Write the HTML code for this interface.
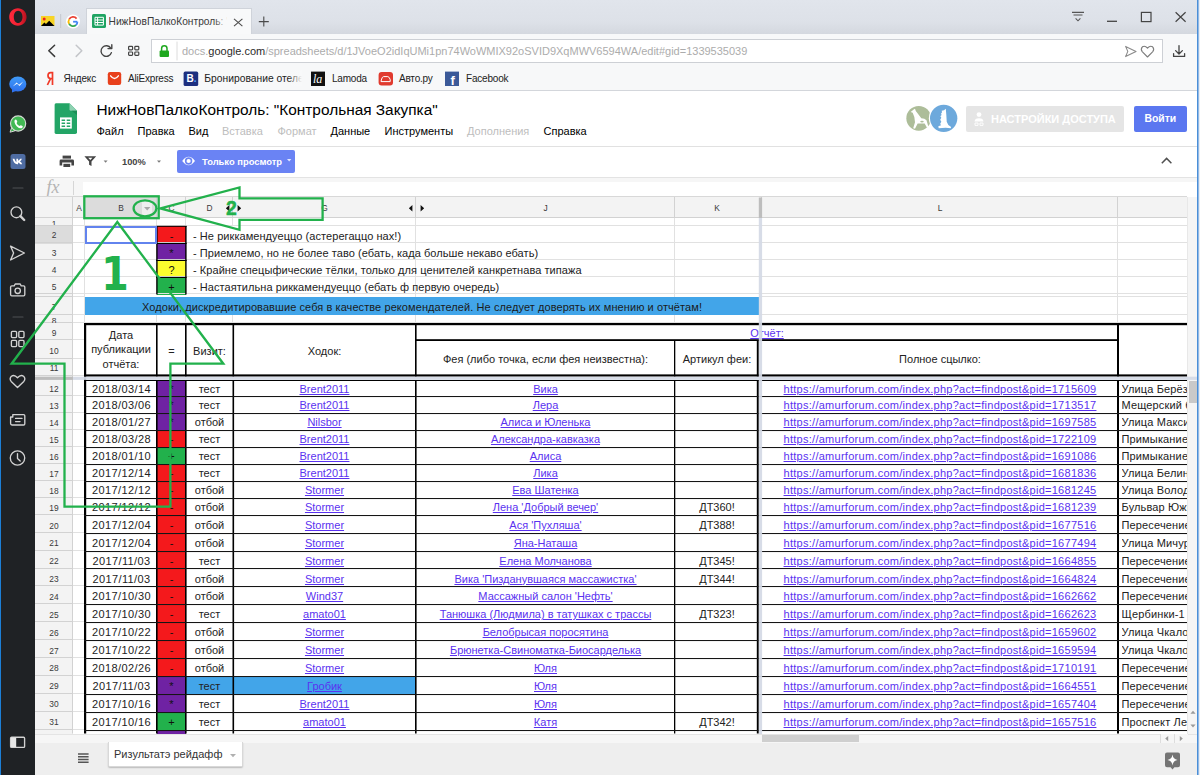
<!DOCTYPE html>
<html lang="ru"><head><meta charset="utf-8"><title>НижНовПалкоКонтроль: "Контрольная Закупка"</title>
<style>
*{box-sizing:border-box;margin:0;padding:0}
html,body{width:1200px;height:775px;overflow:hidden;background:#fff}
body{font-family:"Liberation Sans",sans-serif;font-size:12px;color:#222}
#root{position:relative;width:1200px;height:775px;overflow:hidden;background:#fff}
.abs{position:absolute}
.t{position:absolute;white-space:nowrap;line-height:1}
svg{position:absolute;overflow:visible}
/* opera sidebar */
#side{position:absolute;left:0;top:0;width:35px;height:775px;background:#1f2225;border-left:1px solid #1c7fd6}
/* browser chrome */
#tabbar{position:absolute;left:35px;top:0;width:1165px;height:34px;background:linear-gradient(#e1e5ec,#dde1e8 65%,#d4d8df)}
#tab{position:absolute;left:86px;top:8px;width:165.500px;height:27px;background:#f8f9fa;border:1px solid #cfd3da;border-bottom:none}
#nav{position:absolute;left:35px;top:34px;width:1165px;height:57px;background:#f7f8f9;border-bottom:1px solid #d3d6db}
#url{position:absolute;left:151px;top:39px;width:1012px;height:24px;background:#fff;border:1px solid #cdd0d5}
.bm{font-size:10px;color:#222;top:73.5px;letter-spacing:-0.2px}
/* docs */
#dochead{position:absolute;left:35px;top:91px;width:1163px;height:56px;background:#fff;border-bottom:1px solid #e1e1e1}
#toolbar{position:absolute;left:35px;top:147px;width:1163px;height:31px;background:#fff;border-bottom:1px solid #e3e3e3}
#fbar{position:absolute;left:35px;top:178px;width:1163px;height:19px;background:#fff}
.menu{font-size:11px;top:126px;color:#000}
.menu.dis{color:#bdbdbd}
/* grid */
.c{position:absolute;font-size:11px;color:#222;white-space:nowrap;text-align:center;overflow:hidden;line-height:1}
.c a,.lnk{color:#5a32f0;text-decoration:underline}

</style></head>
<body>
<div id="root">
<!-- ===== Opera sidebar ===== -->
<div id="side"></div>
<svg width="35" height="775" style="left:0;top:0" fill="none" stroke="#d2d2d2" stroke-width="1.350" stroke-linecap="round" stroke-linejoin="round">
  <!-- opera logo -->
  <defs><linearGradient id="og" x1="0" y1="0" x2="1" y2="0"><stop offset="0" stop-color="#ff2a3c"/><stop offset=".6" stop-color="#ee1f30"/><stop offset="1" stop-color="#b3121f"/></linearGradient></defs><path fill-rule="evenodd" stroke="none" fill="url(#og)" d="M17.900 8.200 C22.800 8.200 26.600 12.100 26.600 17 C26.600 21.900 22.800 25.800 17.900 25.800 C13 25.800 9.200 21.900 9.200 17 C9.200 12.100 13 8.200 17.900 8.200 Z M18.100 10.800 C15.500 10.800 13.800 13.600 13.800 16.900 C13.800 20.200 15.500 23 18.100 23 C20.700 23 22.500 20.200 22.500 16.900 C22.500 13.600 20.700 10.800 18.100 10.800 Z"/>
  <!-- messenger -->
  <defs><linearGradient id="mg" x1="0" y1="0" x2="0" y2="1"><stop offset="0" stop-color="#3f9bf8"/><stop offset="1" stop-color="#2f72ee"/></linearGradient></defs><ellipse cx="17.800" cy="84" rx="8.600" ry="7.400" fill="url(#mg)" stroke="none"/>
  <path d="M12 92.400 L12 88 L16 91 Z" fill="#2f72ee" stroke="none"/>
  <path d="M12.8 86.6 L16.6 82.4 L19 84.8 L23.2 81.6 L19.6 86 L17 83.8 Z" fill="#fff" stroke="none"/>
  <!-- whatsapp -->
  <circle cx="18.100" cy="123.500" r="7.600" fill="#42b954" stroke="#d4dcd4" stroke-width="1.200"/>
  <path d="M10.200 131.800 L11.600 127.800 L14.600 130.600 Z" fill="#42b954" stroke="#d4dcd4" stroke-width="1"/>
  <path transform="translate(0.100,-0.500)" d="M14.6 120.6 q1.2-1.4 2 .2 l.6 1.4 q-.2 .8-.8 1.2 q1 2.2 3.200 3.200 q.6-.8 1.200-.8 l1.600 .8 q.8 .8-.4 1.800 q-2 1.400-5.200-1.400 q-3.200-3.400-2.200-6.400 z" fill="#fff" stroke="none"/>
  <!-- vk -->
  <rect x="10.500" y="154" width="15" height="15" rx="2.500" fill="#4f6da3" stroke="none"/>
  <path d="M12.600 158.800 h1.800 q.8 2.600 2 3.400 v-3.400 h1.700 v2 q1.200-.4 2.100-2 h1.700 q-.5 1.600-1.900 2.800 q1.500 .9 2.200 2.600 h-1.900 q-.7-1.300-2.200-1.800 v1.800 h-.9 q-3.400-.2-4.600-5.400 z" fill="#fff" stroke="none"/>
  <line x1="13" y1="188" x2="23" y2="188" stroke="#4e5154" stroke-width="1.200"/>
  <!-- search -->
  <circle cx="16.400" cy="212.300" r="5.400"/>
  <line x1="20.400" y1="216.200" x2="24.200" y2="220" stroke-width="2.400"/>
  <!-- flow -->
  <path d="M10.600 246.200 L24.400 253 L10.600 260 L13.600 253 Z"/>
  <!-- camera -->
  <path d="M10.600 287 q0-1.200 1.200-1.200 h2.400 l1-1.800 h5 l1 1.800 h2.400 q1.200 0 1.200 1.200 v7.600 q0 1.200-1.200 1.200 h-11.800 q-1.200 0-1.200-1.200 z"/>
  <circle cx="17.700" cy="290.800" r="2.700"/>
  <line x1="13" y1="317" x2="23" y2="317" stroke="#4e5154" stroke-width="1.200"/>
  <!-- speed dial -->
  <rect x="11.400" y="331.400" width="5.200" height="6.200" rx="1"/>
  <rect x="18.800" y="331.400" width="5.200" height="6.200" rx="1"/>
  <rect x="11.400" y="340.400" width="5.200" height="6.200" rx="1"/>
  <rect x="18.800" y="340.400" width="5.200" height="6.200" rx="1"/>
  <!-- heart -->
  <path d="M17.500 387.600 L11.200 381.400 q-2.200-2.800 .2-5.200 q3-2 6.100 1.600 q3.100-3.600 6.100-1.600 q2.400 2.400 .2 5.200 z"/>
  <!-- news -->
  <path d="M12.800 414.600 h10.800 q1.200 0 1.200 1.200 v8 q0 1.200-1.200 1.200 h-11.600 q-1.400 0-1.400-1.400 v-6.600 h2.200 z"/>
  <line x1="15.600" y1="418.400" x2="22" y2="418.400"/><line x1="15.600" y1="421.600" x2="20" y2="421.600"/>
  <!-- clock -->
  <circle cx="17.500" cy="458" r="7.200"/>
  <path d="M17.500 453.600 V458.400 L20.200 461"/>
  <!-- sidebar toggle -->
  <rect x="10.600" y="737.200" width="14" height="10.200" rx="1"/>
  <rect x="11" y="737.600" width="5.200" height="9.400" fill="#e6e6e6" stroke="none"/>
</svg>
<!-- ===== tab bar ===== -->
<div id="tabbar"></div>
<div id="tab"></div>
<svg width="1165" height="34" style="left:35px;top:0">
  <!-- picture favicon -->
  <rect x="6" y="16" width="13.500" height="10" fill="#f7d426"/>
  <path d="M6 26 L9.400 22.600 L11 24 L14.200 20.800 L19.500 26 Z" fill="#000"/>
  <circle cx="9.200" cy="19" r="1.500" fill="#ee2222"/>
  <line x1="25.700" y1="14" x2="25.700" y2="28" stroke="#c3c7ce" stroke-width="1"/>
  <!-- google G -->
  <circle cx="38" cy="21.500" r="7" fill="#fff"/>
  <path d="M42.300 21.700 h-4.200" stroke="#4285f4" stroke-width="1.800" fill="none"/>
  <path d="M41.600 18.600 A4.500 4.500 0 0 0 34.100 19.400" stroke="#ea4335" stroke-width="1.800" fill="none"/>
  <path d="M34.100 19.400 A4.500 4.500 0 0 0 34.100 23.800" stroke="#fbbc05" stroke-width="1.800" fill="none"/>
  <path d="M34.100 23.800 A4.500 4.500 0 0 0 41 25" stroke="#34a853" stroke-width="1.800" fill="none"/>
  <path d="M41 25 A4.500 4.500 0 0 0 42.400 21.700" stroke="#4285f4" stroke-width="1.800" fill="none"/>
  <!-- sheets favicon -->
  <rect x="57" y="14" width="14" height="14" rx="1.600" fill="#1fa463"/>
  <path d="M60 17.300 h8.400 v7.800 h-8.400 z M60 20 h8.400 M60 22.500 h8.400 M62.600 17.300 v7.800" stroke="#fff" stroke-width="1" fill="none"/>
  <!-- close x -->
  <path d="M199 18.800 L207.400 26.200 M207.400 18.800 L199 26.200" stroke="#4c4c4c" stroke-width="1.100"/>
  <!-- plus -->
  <path d="M223.800 21.600 h10 M228.800 16.600 v10" stroke="#4a4a4a" stroke-width="1.100"/>
  <!-- window controls -->
  <path d="M1037 12.400 h12 M1038.500 15 h9 M1040.600 18.400 l2.400 2.400 l2.400-2.400" stroke="#555" stroke-width="1.100" fill="none"/>
  <path d="M1072 21.300 h10" stroke="#444" stroke-width="1.300"/>
  <rect x="1106.400" y="12.400" width="9.600" height="9.200" stroke="#444" stroke-width="1.200" fill="none"/>
  <path d="M1140.600 12.200 L1150.600 21.800 M1150.600 12.200 L1140.600 21.800" stroke="#444" stroke-width="1.200"/>
</svg>
<div class="t" style="left:108.500px;top:16.500px;font-size:10.200px;color:#3a3a3a;width:118px;overflow:hidden;letter-spacing:0.02px">НижНовПалкоКонтроль: "Контрольная Закупка"</div>
<div class="abs" style="left:214px;top:12px;width:14px;height:20px;background:linear-gradient(90deg,rgba(248,249,250,0),#f8f9fa)"></div>
<!-- ===== nav + bookmarks ===== -->
<div id="nav"></div>
<div id="url"></div>
<svg width="1165" height="57" style="left:35px;top:34px" fill="none" stroke-linecap="round" stroke-linejoin="round">
  <path d="M19.600 11.200 L13.800 16.800 L19.600 22.400" stroke="#3a3a3a" stroke-width="1.500"/>
  <path d="M41.200 11.200 L46.800 16.800 L41.200 22.400" stroke="#c4c6ca" stroke-width="1.500"/>
  <path d="M75.800 14.200 A5.300 5.300 0 1 0 76.400 18.600" stroke="#444" stroke-width="1.400"/>
  <path d="M76.800 10.800 V14.600 H73" stroke="#444" stroke-width="1.400"/>
  <g stroke="#444" stroke-width="1.200"><rect x="93.600" y="12.400" width="4" height="3.400" rx=".8"/><rect x="99.800" y="12.400" width="4" height="3.400" rx=".8"/><rect x="93.600" y="18" width="4" height="3.400" rx=".8"/><rect x="99.800" y="18" width="4" height="3.400" rx=".8"/></g>
  <!-- lock -->
  <rect x="124.600" y="16.400" width="9.400" height="6.600" rx="1" fill="#1fa81f" stroke="none"/>
  <path d="M126.600 16.400 v-2 a2.700 2.700 0 0 1 5.400 0 v2" stroke="#1fa81f" stroke-width="1.500"/>
  <line x1="142" y1="8" x2="142" y2="26" stroke="#dcdcdc" stroke-width="1"/>
  <!-- send + heart -->
  <path d="M1090.600 12.400 L1101 17.400 L1090.600 22.600 L1092.800 17.400 Z" stroke="#8a8a8a" stroke-width="1.100"/>
  <path d="M1112.500 23 L1107.200 17.600 q-1.900-2.600 .2-4.800 q2.600-1.700 5.100 1.400 q2.500-3.100 5.100-1.400 q2.100 2.200 .2 4.800 z" stroke="#7d7d7d" stroke-width="1.100"/>
  <!-- download -->
  <path d="M1144 11.600 V19.600 M1140.600 16.600 L1144 20 L1147.400 16.600 M1138.600 19.600 V22.400 H1149.600 V19.600" stroke="#444" stroke-width="1.300"/>
  <!-- bookmark icons -->
  <path d="M17.500 51 V38.600 H15.600 q-2.600 0-2.600 3 q0 3 2.600 3 H17.500 M15.400 44.800 L12.400 51" stroke="#f03a28" stroke-width="1.700" stroke-linecap="butt" stroke-linejoin="miter"/>
  <rect x="72.800" y="38" width="13.400" height="13" rx="2.200" fill="#e8401c" stroke="none"/>
  <path d="M75.600 41.800 q3.900 5.400 7.800 0" stroke="#fff" stroke-width="1.300"/>
  <rect x="148.600" y="37.600" width="14.600" height="14.400" rx="1.600" fill="#1d2f7f" stroke="none"/>
  <rect x="276" y="37.600" width="14" height="14.400" fill="#111" stroke="none"/>
  <rect x="343.600" y="38" width="14.400" height="13.600" rx="3" fill="#e03a2e" stroke="none"/>
  <path d="M346.400 45.600 q.6-2.800 2.200-3 h4.200 q1.600 .2 2.400 3 v2 h-8.800 z" stroke="#fff" stroke-width="1"/>
  <rect x="410" y="37.600" width="14" height="14.400" fill="#3b5998" stroke="none"/>
</svg>
<div class="t" style="left:186.500px;top:74px;font-size:10px;font-weight:700;color:#fff">B<span style="color:#4aa3ff">.</span></div>
<div class="t" style="left:313px;top:73px;font-size:12px;font-style:italic;font-family:'Liberation Serif',serif;color:#fff">la</div>
<div class="t" style="left:450.500px;top:73.500px;font-size:13px;font-weight:700;color:#fff">f</div>
<div class="t" id="urltxt" style="left:182px;top:45.700px;font-size:11px;color:#acacac"><span>docs.</span><span style="color:#2b2b2b">google.com</span><span>/spreadsheets/d/1JVoeO2idIqUMi1pn74WoWMIX92oSVID9XqMWV6594WA/edit#gid=1339535039</span></div>
<div class="t bm" style="left:63.500px">Яндекс</div>
<div class="t bm" style="left:128px">AliExpress</div>
<div class="t bm" style="left:204.300px;width:98px;overflow:hidden;font-size:10.300px;letter-spacing:0">Бронирование отелей</div>
<div class="abs" style="left:288px;top:70px;width:14px;height:16px;background:linear-gradient(90deg,rgba(248,249,250,0),#f8f9fa)"></div>
<div class="t bm" style="left:332px">Lamoda</div>
<div class="t bm" style="left:399px">Авто.ру</div>
<div class="t bm" style="left:466px">Facebook</div>
<!-- window right edge -->
<div class="abs" style="left:1197px;top:0;width:1px;height:775px;background:#4a8fd8;z-index:50"></div>
<div class="abs" style="left:1198px;top:0;width:1px;height:775px;background:#94b9e4;z-index:50"></div>
<div class="abs" style="left:1199px;top:0;width:1px;height:775px;background:#e9eef4;z-index:50"></div>
<!-- ===== Google Sheets header ===== -->
<div id="dochead"></div>
<svg width="30" height="40" style="left:50px;top:100px">
  <path d="M6 3.200 H19.500 L27 10.700 V32.200 Q27 34 25.200 34 H6 Q4.600 34 4.600 32.200 V5 Q4.600 3.200 6 3.200 Z" fill="#23a566"/>
  <path d="M19.500 3.200 L27 10.700 H21 Q19.500 10.700 19.500 9.200 Z" fill="#8ed1b1"/>
  <path d="M27 10.700 V15 L21.500 10.700 Z" fill="#1c8f57"/>
  <rect x="10" y="17.400" width="11.800" height="11.200" fill="#fff"/>
  <path d="M11.600 19.400 h3.500 v1.600 h-3.500 z M16.700 19.400 h3.500 v1.600 h-3.500 z M11.600 22.400 h3.500 v1.600 h-3.500 z M16.700 22.400 h3.500 v1.600 h-3.500 z M11.600 25.400 h3.500 v1.600 h-3.500 z M16.700 25.400 h3.500 v1.600 h-3.500 z" fill="#23a566"/>
</svg>
<div class="t" id="title" style="left:96.500px;top:101.500px;font-size:15.400px;color:#000">НижНовПалкоКонтроль: "Контрольная Закупка"</div>
<div class="t menu" style="left:96.500px">Файл</div>
<div class="t menu" style="left:137.500px">Правка</div>
<div class="t menu" style="left:188.500px">Вид</div>
<div class="t menu dis" style="left:222px">Вставка</div>
<div class="t menu dis" style="left:277.500px">Формат</div>
<div class="t menu" style="left:330.500px">Данные</div>
<div class="t menu" style="left:384.500px">Инструменты</div>
<div class="t menu dis" style="left:467px">Дополнения</div>
<div class="t menu" style="left:543.500px">Справка</div>
<!-- avatars -->
<svg width="80" height="45" viewBox="0 0 1200 675" style="left:895px;top:95px">
  <circle cx="356" cy="350" r="186" fill="#adbd99"/>
  <circle cx="730" cy="350" r="222" fill="#fff"/>
  <circle cx="730" cy="350" r="205" fill="#6da9dc"/>
  <path d="M235 255 L285 215 L300 208 L312 240 L395 350 L440 358 L472 380 L502 480 L480 492 L445 427 L340 427 L300 507 L273 500 L300 410 L290 330 L265 268 Z" fill="#fff"/>
  <ellipse cx="405" cy="398" rx="26" ry="13" fill="#adbd99"/>
  <path d="M700 235 L735 227 L762 208 L770 300 L776 400 L800 450 L842 480 L835 497 L760 490 L655 497 L650 470 L690 455 L678 430 L695 400 L678 370 L695 340 L680 318 L700 300 L690 280 L706 260 Z" fill="#fff"/>
</svg>
<!-- share button -->
<div class="abs" style="left:966px;top:105.500px;width:157.500px;height:26.500px;background:#e5e5e5;border-radius:2px"></div>
<svg width="14" height="16" style="left:973px;top:111px" fill="#fff"><circle cx="6" cy="3.600" r="2.400"/><path d="M1.600 10.600 q0-3.400 4.400-3.400 q4.400 0 4.400 3.400 z"/><path d="M2 12 h3 v2.400 h-3 z M7 12 h3 v2.400 h-3 z" fill="none" stroke="#fff" stroke-width=".9"/></svg>
<div class="t" style="left:991px;top:113.500px;font-size:11px;font-weight:700;color:#fff">НАСТРОЙКИ ДОСТУПА</div>
<div class="abs" style="left:1133.500px;top:106px;width:53.500px;height:25.500px;background:#5b77f0;border-radius:2px"></div>
<div class="t" style="left:1144.500px;top:113.500px;font-size:10.400px;font-weight:700;color:#fff">Войти</div>
<!-- toolbar -->
<div id="toolbar"></div>
<svg width="300" height="31" style="left:35px;top:147px">
  <!-- printer -->
  <path d="M27.600 8.600 h8.400 v3 h-8.400 z" fill="#444"/>
  <path d="M26 12.600 h11.600 q1.400 0 1.400 1.400 v4.400 h-2.600 v-2.800 h-9.200 v2.800 h-2.600 v-4.400 q0-1.400 1.400-1.400 z" fill="#444"/>
  <path d="M28.400 16.800 h6.800 v3.200 h-6.800 z" fill="#444"/>
  <!-- filter -->
  <path d="M49.400 9.200 h11.800 l-4.700 5.200 v4.600 l-2.400-1.200 v-3.400 z" fill="#444"/>
  <path d="M53.200 10.700 h4.200 l-2.100 2.300 z" fill="#fff"/>
  <path d="M68.600 13.400 h4 l-2 2.300 z" fill="#7a7a7a"/>
  <path d="M122 13.400 h4 l-2 2.300 z" fill="#7a7a7a"/>
</svg>
<div class="t" style="left:122px;top:157.500px;font-size:9.300px;font-weight:700;color:#444">100%</div>
<div class="abs" style="left:176.500px;top:149.500px;width:118px;height:23.500px;background:#6a83f4;border-radius:2px"></div>
<svg width="16" height="12" style="left:182px;top:155px"><path d="M.2 6 Q6.600 -2.400 13 6 Q6.600 14.400 .2 6 Z" fill="#fff"/><circle cx="6.600" cy="6" r="3.700" fill="#6a83f4"/><circle cx="6.600" cy="6" r="2.100" fill="#fff"/></svg>
<div class="t" style="left:202px;top:156.500px;font-size:9.400px;font-weight:700;color:#fff">Только просмотр</div>
<svg width="6" height="4" style="left:286.500px;top:159px"><path d="M0 0 h4.400 l-2.200 2.400 z" fill="#e3e8ff"/></svg>
<svg width="14" height="10" style="left:1160px;top:156px"><path d="M1.800 7.200 L6.600 2.400 L11.400 7.200" fill="none" stroke="#505050" stroke-width="1.450"/></svg>
<!-- formula bar -->
<div id="fbar"></div>
<div class="abs" style="left:35px;top:178px;width:48px;height:19px;background:#f6f6f6"></div>
<div class="abs" style="left:83px;top:178px;width:1115px;height:3.500px;background:#f6f6f6"></div>
<div class="t" style="left:46.500px;top:177.500px;font-size:18px;font-style:italic;font-family:'Liberation Serif',serif;color:#b4b4b4">fx</div>
<div class="abs" style="left:73px;top:180.500px;width:1px;height:14px;background:#d6d6d6"></div>
<div id="gridwrap" class="abs" style="left:0;top:0;width:1187px;height:733.5px;overflow:hidden">
<div class="abs" style="left:35px;top:197px;width:1152px;height:21px;background:#f3f3f3"></div>
<div class="abs" style="left:35px;top:197px;width:38px;height:537px;background:#f3f3f3"></div>
<div class="abs" style="left:85px;top:197px;width:72px;height:21px;background:#dcdcdc"></div>
<div class="abs" style="left:35px;top:226px;width:38px;height:17.5px;background:#dcdcdc"></div>
<div class="abs" style="left:142px;top:201px;width:10px;height:14px;background:#efefef"></div>
<svg width="8" height="5" style="left:144px;top:206.5px"><path d="M0 0 h6.400 l-3.200 3.600 z" fill="#a8a8a8"/></svg>
<div class="abs" style="left:157px;top:226px;width:29px;height:17.5px;background:#f4191c"></div>
<div class="abs" style="left:157px;top:243.5px;width:29px;height:17px;background:#6f22a3"></div>
<div class="abs" style="left:157px;top:260.5px;width:29px;height:17px;background:#fcfc2e"></div>
<div class="abs" style="left:157px;top:277.5px;width:29px;height:17px;background:#22b14c"></div>
<div class="abs" style="left:85px;top:297px;width:674px;height:18px;background:#42a5e9"></div>
<div class="abs" style="left:157px;top:380px;width:29px;height:16.6px;background:#6f22a3"></div>
<div class="abs" style="left:157px;top:396.6px;width:29px;height:16.9px;background:#6f22a3"></div>
<div class="abs" style="left:157px;top:413.5px;width:29px;height:16.9px;background:#6f22a3"></div>
<div class="abs" style="left:157px;top:430.4px;width:29px;height:17px;background:#f4191c"></div>
<div class="abs" style="left:157px;top:447.4px;width:29px;height:17px;background:#22b14c"></div>
<div class="abs" style="left:157px;top:464.4px;width:29px;height:17px;background:#f4191c"></div>
<div class="abs" style="left:157px;top:481.4px;width:29px;height:17px;background:#f4191c"></div>
<div class="abs" style="left:157px;top:498.4px;width:29px;height:17.1px;background:#f4191c"></div>
<div class="abs" style="left:157px;top:515.5px;width:29px;height:17.8px;background:#f4191c"></div>
<div class="abs" style="left:157px;top:533.3px;width:29px;height:17.8px;background:#f4191c"></div>
<div class="abs" style="left:157px;top:551.1px;width:29px;height:17.8px;background:#f4191c"></div>
<div class="abs" style="left:157px;top:568.9px;width:29px;height:17.7px;background:#f4191c"></div>
<div class="abs" style="left:157px;top:586.6px;width:29px;height:17.9px;background:#f4191c"></div>
<div class="abs" style="left:157px;top:604.5px;width:29px;height:17.9px;background:#f4191c"></div>
<div class="abs" style="left:157px;top:622.4px;width:29px;height:17.9px;background:#f4191c"></div>
<div class="abs" style="left:157px;top:640.3px;width:29px;height:18px;background:#f4191c"></div>
<div class="abs" style="left:157px;top:658.3px;width:29px;height:17.9px;background:#f4191c"></div>
<div class="abs" style="left:157px;top:676.2px;width:29px;height:17.9px;background:#6f22a3"></div>
<div class="abs" style="left:157px;top:694.1px;width:29px;height:18.1px;background:#6f22a3"></div>
<div class="abs" style="left:157px;top:712.2px;width:29px;height:17.8px;background:#22b14c"></div>
<div class="abs" style="left:157px;top:730px;width:29px;height:3.5px;background:#6f22a3"></div>
<div class="abs" style="left:186px;top:676.2px;width:230px;height:17.9px;background:#42a5e9"></div>
<svg width="1187" height="734" style="left:0;top:0" shape-rendering="auto"><rect x="72" y="197" width="1" height="21" fill="#d2d2d2"/><rect x="84" y="197" width="1" height="21" fill="#d2d2d2"/><rect x="156" y="197" width="1" height="21" fill="#d2d2d2"/><rect x="185" y="197" width="1" height="21" fill="#d2d2d2"/><rect x="232" y="197" width="1" height="21" fill="#d2d2d2"/><rect x="415" y="197" width="1" height="21" fill="#d2d2d2"/><rect x="674" y="197" width="1" height="21" fill="#d2d2d2"/><rect x="761" y="197" width="1" height="21" fill="#d2d2d2"/><rect x="1117" y="197" width="1" height="21" fill="#d2d2d2"/><rect x="35" y="217" width="1152" height="1" fill="#d2d2d2"/><rect x="35" y="196" width="1152" height="1" fill="#d8d8d8"/><rect x="72" y="197" width="1" height="536.5" fill="#d2d2d2"/><rect x="35" y="225" width="38" height="1" fill="#d2d2d2"/><rect x="35" y="242" width="38" height="1" fill="#d2d2d2"/><rect x="35" y="259" width="38" height="1" fill="#d2d2d2"/><rect x="35" y="276" width="38" height="1" fill="#d2d2d2"/><rect x="35" y="293" width="38" height="1" fill="#d2d2d2"/><rect x="35" y="296" width="38" height="1" fill="#d2d2d2"/><rect x="35" y="314" width="38" height="1" fill="#d2d2d2"/><rect x="35" y="322" width="38" height="1" fill="#d2d2d2"/><rect x="35" y="339" width="38" height="1" fill="#d2d2d2"/><rect x="35" y="358" width="38" height="1" fill="#d2d2d2"/><rect x="35" y="375" width="38" height="1" fill="#d2d2d2"/><rect x="35" y="395" width="38" height="1" fill="#d2d2d2"/><rect x="35" y="412" width="38" height="1" fill="#d2d2d2"/><rect x="35" y="429" width="38" height="1" fill="#d2d2d2"/><rect x="35" y="446" width="38" height="1" fill="#d2d2d2"/><rect x="35" y="463" width="38" height="1" fill="#d2d2d2"/><rect x="35" y="480" width="38" height="1" fill="#d2d2d2"/><rect x="35" y="497" width="38" height="1" fill="#d2d2d2"/><rect x="35" y="514" width="38" height="1" fill="#d2d2d2"/><rect x="35" y="532" width="38" height="1" fill="#d2d2d2"/><rect x="35" y="550" width="38" height="1" fill="#d2d2d2"/><rect x="35" y="568" width="38" height="1" fill="#d2d2d2"/><rect x="35" y="585" width="38" height="1" fill="#d2d2d2"/><rect x="35" y="603" width="38" height="1" fill="#d2d2d2"/><rect x="35" y="621" width="38" height="1" fill="#d2d2d2"/><rect x="35" y="639" width="38" height="1" fill="#d2d2d2"/><rect x="35" y="657" width="38" height="1" fill="#d2d2d2"/><rect x="35" y="675" width="38" height="1" fill="#d2d2d2"/><rect x="35" y="693" width="38" height="1" fill="#d2d2d2"/><rect x="35" y="711" width="38" height="1" fill="#d2d2d2"/><rect x="35" y="729" width="38" height="1" fill="#d2d2d2"/><rect x="35" y="747" width="38" height="1" fill="#d2d2d2"/><rect x="73" y="225" width="1114" height="1" fill="#e1e1e1"/><rect x="73" y="242" width="1114" height="1" fill="#e1e1e1"/><rect x="73" y="259" width="1114" height="1" fill="#e1e1e1"/><rect x="73" y="276" width="1114" height="1" fill="#e1e1e1"/><rect x="73" y="293" width="1114" height="1" fill="#e1e1e1"/><rect x="73" y="296" width="12" height="1" fill="#e1e1e1"/><rect x="759" y="296" width="428" height="1" fill="#e1e1e1"/><rect x="73" y="314" width="12" height="1" fill="#e1e1e1"/><rect x="759" y="314" width="428" height="1" fill="#e1e1e1"/><rect x="73" y="322" width="1114" height="1" fill="#e1e1e1"/><rect x="84" y="218" width="1" height="8" fill="#e1e1e1"/><rect x="84" y="315" width="1" height="8" fill="#e1e1e1"/><rect x="156" y="218" width="1" height="8" fill="#e1e1e1"/><rect x="156" y="315" width="1" height="8" fill="#e1e1e1"/><rect x="185" y="218" width="1" height="8" fill="#e1e1e1"/><rect x="185" y="315" width="1" height="8" fill="#e1e1e1"/><rect x="232" y="218" width="1" height="8" fill="#e1e1e1"/><rect x="232" y="315" width="1" height="8" fill="#e1e1e1"/><rect x="415" y="218" width="1" height="8" fill="#e1e1e1"/><rect x="415" y="315" width="1" height="8" fill="#e1e1e1"/><rect x="674" y="218" width="1" height="8" fill="#e1e1e1"/><rect x="674" y="315" width="1" height="8" fill="#e1e1e1"/><rect x="1117" y="218" width="1" height="8" fill="#e1e1e1"/><rect x="1117" y="315" width="1" height="8" fill="#e1e1e1"/><rect x="84" y="218" width="1" height="106" fill="#e1e1e1"/><rect x="1117" y="218" width="1" height="106" fill="#e1e1e1"/><rect x="674" y="226" width="1" height="71" fill="#e1e1e1"/><rect x="415" y="226" width="1" height="71" fill="#e1e1e1"/><rect x="73" y="339" width="12" height="1" fill="#e1e1e1"/><rect x="73" y="358" width="12" height="1" fill="#e1e1e1"/><rect x="73" y="375" width="12" height="1" fill="#e1e1e1"/><rect x="73" y="395" width="12" height="1" fill="#e1e1e1"/><rect x="73" y="412" width="12" height="1" fill="#e1e1e1"/><rect x="73" y="429" width="12" height="1" fill="#e1e1e1"/><rect x="73" y="446" width="12" height="1" fill="#e1e1e1"/><rect x="73" y="463" width="12" height="1" fill="#e1e1e1"/><rect x="73" y="480" width="12" height="1" fill="#e1e1e1"/><rect x="73" y="497" width="12" height="1" fill="#e1e1e1"/><rect x="73" y="514" width="12" height="1" fill="#e1e1e1"/><rect x="73" y="532" width="12" height="1" fill="#e1e1e1"/><rect x="73" y="550" width="12" height="1" fill="#e1e1e1"/><rect x="73" y="568" width="12" height="1" fill="#e1e1e1"/><rect x="73" y="585" width="12" height="1" fill="#e1e1e1"/><rect x="73" y="603" width="12" height="1" fill="#e1e1e1"/><rect x="73" y="621" width="12" height="1" fill="#e1e1e1"/><rect x="73" y="639" width="12" height="1" fill="#e1e1e1"/><rect x="73" y="657" width="12" height="1" fill="#e1e1e1"/><rect x="73" y="675" width="12" height="1" fill="#e1e1e1"/><rect x="73" y="693" width="12" height="1" fill="#e1e1e1"/><rect x="73" y="711" width="12" height="1" fill="#e1e1e1"/><rect x="73" y="729" width="12" height="1" fill="#e1e1e1"/><rect x="73" y="747" width="12" height="1" fill="#e1e1e1"/><rect x="156.2" y="226" width="1.4" height="68.5" fill="#000"/><rect x="185.2" y="226" width="1.4" height="68.5" fill="#000"/><rect x="156.2" y="225.8" width="30.4" height="1" fill="#000"/><rect x="156.2" y="242.9" width="30.4" height="1.1" fill="#000"/><rect x="156.2" y="259.9" width="30.4" height="1.1" fill="#000"/><rect x="156.2" y="276.9" width="30.4" height="1.1" fill="#000"/><rect x="84" y="323" width="1103" height="2.2" fill="#000"/><rect x="84" y="374.4" width="1103" height="2.2" fill="#000"/><rect x="416" y="339.2" width="702" height="1.8" fill="#000"/><rect x="84" y="323" width="2.2" height="410.5" fill="#000"/><rect x="156" y="323" width="1.6" height="53.6" fill="#000"/><rect x="156" y="380" width="1.6" height="353.5" fill="#000"/><rect x="185" y="323" width="1.6" height="53.6" fill="#000"/><rect x="185" y="380" width="1.6" height="353.5" fill="#000"/><rect x="232.5" y="323" width="1.6" height="53.6" fill="#000"/><rect x="232.5" y="380" width="1.6" height="353.5" fill="#000"/><rect x="415" y="323" width="1.6" height="53.6" fill="#000"/><rect x="415" y="380" width="1.6" height="353.5" fill="#000"/><rect x="674" y="340" width="1.3" height="36.6" fill="#000"/><rect x="674" y="380" width="1.3" height="353.5" fill="#000"/><rect x="756.8" y="340" width="2" height="36.6" fill="#000"/><rect x="756.8" y="380" width="2" height="353.5" fill="#000"/><rect x="1117" y="323" width="2" height="53.6" fill="#000"/><rect x="1117" y="380" width="2" height="353.5" fill="#000"/><rect x="84" y="380" width="1103" height="1" fill="#000"/><rect x="84" y="396" width="1103" height="1.050" fill="#151515"/><rect x="84" y="413" width="1103" height="1.050" fill="#151515"/><rect x="84" y="430" width="1103" height="1.050" fill="#151515"/><rect x="84" y="447" width="1103" height="1.050" fill="#151515"/><rect x="84" y="464" width="1103" height="1.050" fill="#151515"/><rect x="84" y="481" width="1103" height="1.050" fill="#151515"/><rect x="84" y="498" width="1103" height="1.050" fill="#151515"/><rect x="84" y="515" width="1103" height="1.050" fill="#151515"/><rect x="84" y="533" width="1103" height="1.050" fill="#151515"/><rect x="84" y="551" width="1103" height="1.050" fill="#151515"/><rect x="84" y="568" width="1103" height="1.050" fill="#151515"/><rect x="84" y="586" width="1103" height="1.050" fill="#151515"/><rect x="84" y="604" width="1103" height="1.050" fill="#151515"/><rect x="84" y="622" width="1103" height="1.050" fill="#151515"/><rect x="84" y="640" width="1103" height="1.050" fill="#151515"/><rect x="84" y="658" width="1103" height="1.050" fill="#151515"/><rect x="84" y="676" width="1103" height="1.050" fill="#151515"/><rect x="84" y="694" width="1103" height="1.050" fill="#151515"/><rect x="84" y="712" width="1103" height="1.050" fill="#151515"/><rect x="84" y="730" width="1103" height="1.050" fill="#151515"/></svg>
<div class="t" style="left:73px;top:203.500px;width:12px;text-align:center;font-size:8.400px;color:#3a3a3a">A</div>
<div class="t" style="left:85px;top:203.500px;width:72px;text-align:center;font-size:8.400px;color:#3a3a3a">B</div>
<div class="t" style="left:157px;top:203.500px;width:29px;text-align:center;font-size:8.400px;color:#3a3a3a">C</div>
<div class="t" style="left:186px;top:203.500px;width:47px;text-align:center;font-size:8.400px;color:#3a3a3a">D</div>
<div class="t" style="left:233px;top:203.500px;width:183px;text-align:center;font-size:8.400px;color:#3a3a3a">G</div>
<div class="t" style="left:416px;top:203.500px;width:259px;text-align:center;font-size:8.400px;color:#3a3a3a">J</div>
<div class="t" style="left:675px;top:203.500px;width:84px;text-align:center;font-size:8.400px;color:#3a3a3a">K</div>
<div class="t" style="left:762px;top:203.500px;width:356px;text-align:center;font-size:8.400px;color:#3a3a3a">L</div>
<svg width="220" height="10" style="left:222px;top:203px" fill="#111"><path d="M7.400 2 v6.400 l-3.600-3.200 z M15.600 2 v6.400 l3.600-3.200 z M190.400 2 v6.400 l-3.600-3.200 z M198.600 2 v6.400 l3.600-3.200 z"/></svg>
<div class="abs" style="left:35px;top:218px;width:38px;height:7px;overflow:hidden"><div class="t" style="left:0;top:2px;width:38px;text-align:center;font-size:8.400px;color:#3a3a3a">1</div></div>
<div class="t" style="left:35px;top:231.35px;width:38px;text-align:center;font-size:8.400px;color:#3a3a3a">2</div>
<div class="t" style="left:35px;top:248.6px;width:38px;text-align:center;font-size:8.400px;color:#3a3a3a">3</div>
<div class="t" style="left:35px;top:265.6px;width:38px;text-align:center;font-size:8.400px;color:#3a3a3a">4</div>
<div class="t" style="left:35px;top:282.6px;width:38px;text-align:center;font-size:8.400px;color:#3a3a3a">5</div>
<div class="t" style="left:35px;top:302.6px;width:38px;text-align:center;font-size:8.400px;color:#3a3a3a">7</div>
<div class="abs" style="left:35px;top:315px;width:38px;height:7.5px;overflow:hidden"><div class="t" style="left:0;top:2px;width:38px;text-align:center;font-size:8.400px;color:#3a3a3a">8</div></div>
<div class="t" style="left:35px;top:328.6px;width:38px;text-align:center;font-size:8.400px;color:#3a3a3a">9</div>
<div class="t" style="left:35px;top:346.6px;width:38px;text-align:center;font-size:8.400px;color:#3a3a3a">10</div>
<div class="t" style="left:35px;top:364.35px;width:38px;text-align:center;font-size:8.400px;color:#3a3a3a">11</div>
<div class="t" style="left:35px;top:384.9px;width:38px;text-align:center;font-size:8.400px;color:#3a3a3a">12</div>
<div class="t" style="left:35px;top:401.65px;width:38px;text-align:center;font-size:8.400px;color:#3a3a3a">13</div>
<div class="t" style="left:35px;top:418.55px;width:38px;text-align:center;font-size:8.400px;color:#3a3a3a">14</div>
<div class="t" style="left:35px;top:435.5px;width:38px;text-align:center;font-size:8.400px;color:#3a3a3a">15</div>
<div class="t" style="left:35px;top:452.5px;width:38px;text-align:center;font-size:8.400px;color:#3a3a3a">16</div>
<div class="t" style="left:35px;top:469.5px;width:38px;text-align:center;font-size:8.400px;color:#3a3a3a">17</div>
<div class="t" style="left:35px;top:486.5px;width:38px;text-align:center;font-size:8.400px;color:#3a3a3a">18</div>
<div class="t" style="left:35px;top:503.55px;width:38px;text-align:center;font-size:8.400px;color:#3a3a3a">19</div>
<div class="t" style="left:35px;top:521.6px;width:38px;text-align:center;font-size:8.400px;color:#3a3a3a">20</div>
<div class="t" style="left:35px;top:539.4px;width:38px;text-align:center;font-size:8.400px;color:#3a3a3a">21</div>
<div class="t" style="left:35px;top:557.2px;width:38px;text-align:center;font-size:8.400px;color:#3a3a3a">22</div>
<div class="t" style="left:35px;top:574.95px;width:38px;text-align:center;font-size:8.400px;color:#3a3a3a">23</div>
<div class="t" style="left:35px;top:592.75px;width:38px;text-align:center;font-size:8.400px;color:#3a3a3a">24</div>
<div class="t" style="left:35px;top:610.65px;width:38px;text-align:center;font-size:8.400px;color:#3a3a3a">25</div>
<div class="t" style="left:35px;top:628.55px;width:38px;text-align:center;font-size:8.400px;color:#3a3a3a">26</div>
<div class="t" style="left:35px;top:646.5px;width:38px;text-align:center;font-size:8.400px;color:#3a3a3a">27</div>
<div class="t" style="left:35px;top:664.45px;width:38px;text-align:center;font-size:8.400px;color:#3a3a3a">28</div>
<div class="t" style="left:35px;top:682.35px;width:38px;text-align:center;font-size:8.400px;color:#3a3a3a">29</div>
<div class="t" style="left:35px;top:700.35px;width:38px;text-align:center;font-size:8.400px;color:#3a3a3a">30</div>
<div class="t" style="left:35px;top:718.3px;width:38px;text-align:center;font-size:8.400px;color:#3a3a3a">31</div>
<div class="c" style="left:157px;top:228.85px;width:29px;height:14px;line-height:14px;font-size:11px;color:#111">-</div>
<div class="c" style="left:193px;top:228.85px;height:14px;line-height:14px;text-align:left;overflow:visible;letter-spacing:.06px">- Не риккамендуеццо (астерегаццо нах!)</div>
<div class="c" style="left:157px;top:246.1px;width:29px;height:14px;line-height:14px;font-size:11px;color:#111">*</div>
<div class="c" style="left:193px;top:246.1px;height:14px;line-height:14px;text-align:left;overflow:visible;letter-spacing:.06px">- Приемлемо, но не более таво (ебать, када больше некаво ебать)</div>
<div class="c" style="left:157px;top:263.1px;width:29px;height:14px;line-height:14px;font-size:11px;color:#111">?</div>
<div class="c" style="left:193px;top:263.1px;height:14px;line-height:14px;text-align:left;overflow:visible;letter-spacing:.06px">- Крайне спецыфические тёлки, только для ценителей канкретнава типажа</div>
<div class="c" style="left:157px;top:280.1px;width:29px;height:14px;line-height:14px;font-size:11px;color:#111">+</div>
<div class="c" style="left:193px;top:280.1px;height:14px;line-height:14px;text-align:left;overflow:visible;letter-spacing:.06px">- Настаятильна риккамендуеццо (ебать ф первую очередь)</div>
<div class="c" style="left:85px;top:299.5px;width:674px;height:14px;line-height:14px;font-size:11px;letter-spacing:.08px;color:#1b1b1b">Ходоки, дискредитировавшие себя в качестве рекомендателей. Не следует доверять их мнению и отчётам!</div>
<div class="c" style="left:86px;top:327.500px;width:70px;line-height:14.500px;white-space:normal">Дата публикации отчёта:</div>
<div class="c" style="left:157px;top:343.5px;width:29px;height:14px;line-height:14px;font-size:11px;">=</div>
<div class="c" style="left:186px;top:343.5px;width:47px;height:14px;line-height:14px;font-size:11px;">Визит:</div>
<div class="c" style="left:233px;top:343.5px;width:183px;height:14px;line-height:14px;font-size:11px;">Ходок:</div>
<div class="c" style="left:416px;top:326px;width:702px;height:14px;line-height:14px;font-size:11px;"><span class="lnk">Отчёт:</span></div>
<div class="c" style="left:416px;top:352px;width:259px;height:14px;line-height:14px;font-size:11px;">Фея (либо точка, если фея неизвестна):</div>
<div class="c" style="left:675px;top:352px;width:84px;height:14px;line-height:14px;font-size:11px;">Артикул феи:</div>
<div class="c" style="left:762px;top:352px;width:356px;height:14px;line-height:14px;font-size:11px;">Полное сцылко:</div>
<div class="c" style="left:85px;top:381.6px;width:72px;height:14px;line-height:14px;font-size:11px;letter-spacing:.38px;padding-left:1px">2018/03/14</div>
<div class="c" style="left:157px;top:381.6px;width:29px;height:14px;line-height:14px;font-size:11px;color:#111">*</div>
<div class="c" style="left:186px;top:381.6px;width:47px;height:14px;line-height:14px;font-size:11px;">тест</div>
<div class="c" style="left:233px;top:381.6px;width:183px;height:14px;line-height:14px;font-size:11px;"><span class="lnk">Brent2011</span></div>
<div class="c" style="left:416px;top:381.6px;width:259px;height:14px;line-height:14px;font-size:11px;"><span class="lnk">Вика</span></div>
<div class="c" style="left:762px;top:381.6px;width:356px;height:14px;line-height:14px;font-size:11px;letter-spacing:.27px"><span class="lnk">https://amurforum.com/index.php?act=findpost&amp;pid=1715609</span></div>
<div class="c" style="left:1121.500px;top:381.6px;width:65.500px;height:14px;line-height:14px;text-align:left;letter-spacing:.15px">Улица Берёзовская</div>
<div class="c" style="left:85px;top:398.35px;width:72px;height:14px;line-height:14px;font-size:11px;letter-spacing:.38px;padding-left:1px">2018/03/06</div>
<div class="c" style="left:157px;top:398.35px;width:29px;height:14px;line-height:14px;font-size:11px;color:#111">*</div>
<div class="c" style="left:186px;top:398.35px;width:47px;height:14px;line-height:14px;font-size:11px;">тест</div>
<div class="c" style="left:233px;top:398.35px;width:183px;height:14px;line-height:14px;font-size:11px;"><span class="lnk">Brent2011</span></div>
<div class="c" style="left:416px;top:398.35px;width:259px;height:14px;line-height:14px;font-size:11px;"><span class="lnk">Лера</span></div>
<div class="c" style="left:762px;top:398.35px;width:356px;height:14px;line-height:14px;font-size:11px;letter-spacing:.27px"><span class="lnk">https://amurforum.com/index.php?act=findpost&amp;pid=1713517</span></div>
<div class="c" style="left:1121.500px;top:398.35px;width:65.500px;height:14px;line-height:14px;text-align:left;letter-spacing:.15px">Мещерский бульвар</div>
<div class="c" style="left:85px;top:415.25px;width:72px;height:14px;line-height:14px;font-size:11px;letter-spacing:.38px;padding-left:1px">2018/01/27</div>
<div class="c" style="left:157px;top:415.25px;width:29px;height:14px;line-height:14px;font-size:11px;color:#111">*</div>
<div class="c" style="left:186px;top:415.25px;width:47px;height:14px;line-height:14px;font-size:11px;">отбой</div>
<div class="c" style="left:233px;top:415.25px;width:183px;height:14px;line-height:14px;font-size:11px;"><span class="lnk">Nilsbor</span></div>
<div class="c" style="left:416px;top:415.25px;width:259px;height:14px;line-height:14px;font-size:11px;"><span class="lnk">Алиса и Юленька</span></div>
<div class="c" style="left:762px;top:415.25px;width:356px;height:14px;line-height:14px;font-size:11px;letter-spacing:.27px"><span class="lnk">https://amurforum.com/index.php?act=findpost&amp;pid=1697585</span></div>
<div class="c" style="left:1121.500px;top:415.25px;width:65.500px;height:14px;line-height:14px;text-align:left;letter-spacing:.15px">Улица Максима Горького</div>
<div class="c" style="left:85px;top:432.2px;width:72px;height:14px;line-height:14px;font-size:11px;letter-spacing:.38px;padding-left:1px">2018/03/28</div>
<div class="c" style="left:157px;top:432.2px;width:29px;height:14px;line-height:14px;font-size:11px;color:#111">-</div>
<div class="c" style="left:186px;top:432.2px;width:47px;height:14px;line-height:14px;font-size:11px;">тест</div>
<div class="c" style="left:233px;top:432.2px;width:183px;height:14px;line-height:14px;font-size:11px;"><span class="lnk">Brent2011</span></div>
<div class="c" style="left:416px;top:432.2px;width:259px;height:14px;line-height:14px;font-size:11px;"><span class="lnk">Александра-кавказка</span></div>
<div class="c" style="left:762px;top:432.2px;width:356px;height:14px;line-height:14px;font-size:11px;letter-spacing:.27px"><span class="lnk">https://amurforum.com/index.php?act=findpost&amp;pid=1722109</span></div>
<div class="c" style="left:1121.500px;top:432.2px;width:65.500px;height:14px;line-height:14px;text-align:left;letter-spacing:.15px">Примыкание улицы</div>
<div class="c" style="left:85px;top:449.2px;width:72px;height:14px;line-height:14px;font-size:11px;letter-spacing:.38px;padding-left:1px">2018/01/10</div>
<div class="c" style="left:157px;top:449.2px;width:29px;height:14px;line-height:14px;font-size:11px;color:#111">+</div>
<div class="c" style="left:186px;top:449.2px;width:47px;height:14px;line-height:14px;font-size:11px;">тест</div>
<div class="c" style="left:233px;top:449.2px;width:183px;height:14px;line-height:14px;font-size:11px;"><span class="lnk">Brent2011</span></div>
<div class="c" style="left:416px;top:449.2px;width:259px;height:14px;line-height:14px;font-size:11px;"><span class="lnk">Алиса</span></div>
<div class="c" style="left:762px;top:449.2px;width:356px;height:14px;line-height:14px;font-size:11px;letter-spacing:.27px"><span class="lnk">https://amurforum.com/index.php?act=findpost&amp;pid=1691086</span></div>
<div class="c" style="left:1121.500px;top:449.2px;width:65.500px;height:14px;line-height:14px;text-align:left;letter-spacing:.15px">Примыкание улицы</div>
<div class="c" style="left:85px;top:466.2px;width:72px;height:14px;line-height:14px;font-size:11px;letter-spacing:.38px;padding-left:1px">2017/12/14</div>
<div class="c" style="left:157px;top:466.2px;width:29px;height:14px;line-height:14px;font-size:11px;color:#111">-</div>
<div class="c" style="left:186px;top:466.2px;width:47px;height:14px;line-height:14px;font-size:11px;">тест</div>
<div class="c" style="left:233px;top:466.2px;width:183px;height:14px;line-height:14px;font-size:11px;"><span class="lnk">Brent2011</span></div>
<div class="c" style="left:416px;top:466.2px;width:259px;height:14px;line-height:14px;font-size:11px;"><span class="lnk">Лика</span></div>
<div class="c" style="left:762px;top:466.2px;width:356px;height:14px;line-height:14px;font-size:11px;letter-spacing:.27px"><span class="lnk">https://amurforum.com/index.php?act=findpost&amp;pid=1681836</span></div>
<div class="c" style="left:1121.500px;top:466.2px;width:65.500px;height:14px;line-height:14px;text-align:left;letter-spacing:.15px">Улица Белинского</div>
<div class="c" style="left:85px;top:483.2px;width:72px;height:14px;line-height:14px;font-size:11px;letter-spacing:.38px;padding-left:1px">2017/12/12</div>
<div class="c" style="left:157px;top:483.2px;width:29px;height:14px;line-height:14px;font-size:11px;color:#111">-</div>
<div class="c" style="left:186px;top:483.2px;width:47px;height:14px;line-height:14px;font-size:11px;">отбой</div>
<div class="c" style="left:233px;top:483.2px;width:183px;height:14px;line-height:14px;font-size:11px;"><span class="lnk">Stormer</span></div>
<div class="c" style="left:416px;top:483.2px;width:259px;height:14px;line-height:14px;font-size:11px;"><span class="lnk">Ева Шатенка</span></div>
<div class="c" style="left:762px;top:483.2px;width:356px;height:14px;line-height:14px;font-size:11px;letter-spacing:.27px"><span class="lnk">https://amurforum.com/index.php?act=findpost&amp;pid=1681245</span></div>
<div class="c" style="left:1121.500px;top:483.2px;width:65.500px;height:14px;line-height:14px;text-align:left;letter-spacing:.15px">Улица Володарского</div>
<div class="c" style="left:85px;top:500.25px;width:72px;height:14px;line-height:14px;font-size:11px;letter-spacing:.38px;padding-left:1px">2017/12/12</div>
<div class="c" style="left:157px;top:500.25px;width:29px;height:14px;line-height:14px;font-size:11px;color:#111">-</div>
<div class="c" style="left:186px;top:500.25px;width:47px;height:14px;line-height:14px;font-size:11px;">отбой</div>
<div class="c" style="left:233px;top:500.25px;width:183px;height:14px;line-height:14px;font-size:11px;"><span class="lnk">Stormer</span></div>
<div class="c" style="left:416px;top:500.25px;width:259px;height:14px;line-height:14px;font-size:11px;"><span class="lnk">Лена 'Добрый вечер'</span></div>
<div class="c" style="left:675px;top:500.25px;width:84px;height:14px;line-height:14px;font-size:11px;">ДТ360!</div>
<div class="c" style="left:762px;top:500.25px;width:356px;height:14px;line-height:14px;font-size:11px;letter-spacing:.27px"><span class="lnk">https://amurforum.com/index.php?act=findpost&amp;pid=1681239</span></div>
<div class="c" style="left:1121.500px;top:500.25px;width:65.500px;height:14px;line-height:14px;text-align:left;letter-spacing:.15px">Бульвар Южный</div>
<div class="c" style="left:85px;top:518.2px;width:72px;height:14px;line-height:14px;font-size:11px;letter-spacing:.38px;padding-left:1px">2017/12/04</div>
<div class="c" style="left:157px;top:518.2px;width:29px;height:14px;line-height:14px;font-size:11px;color:#111">-</div>
<div class="c" style="left:186px;top:518.2px;width:47px;height:14px;line-height:14px;font-size:11px;">отбой</div>
<div class="c" style="left:233px;top:518.2px;width:183px;height:14px;line-height:14px;font-size:11px;"><span class="lnk">Stormer</span></div>
<div class="c" style="left:416px;top:518.2px;width:259px;height:14px;line-height:14px;font-size:11px;"><span class="lnk">Ася 'Пухляша'</span></div>
<div class="c" style="left:675px;top:518.2px;width:84px;height:14px;line-height:14px;font-size:11px;">ДТ388!</div>
<div class="c" style="left:762px;top:518.2px;width:356px;height:14px;line-height:14px;font-size:11px;letter-spacing:.27px"><span class="lnk">https://amurforum.com/index.php?act=findpost&amp;pid=1677516</span></div>
<div class="c" style="left:1121.500px;top:518.2px;width:65.500px;height:14px;line-height:14px;text-align:left;letter-spacing:.15px">Пересечение улиц</div>
<div class="c" style="left:85px;top:536px;width:72px;height:14px;line-height:14px;font-size:11px;letter-spacing:.38px;padding-left:1px">2017/12/04</div>
<div class="c" style="left:157px;top:536px;width:29px;height:14px;line-height:14px;font-size:11px;color:#111">-</div>
<div class="c" style="left:186px;top:536px;width:47px;height:14px;line-height:14px;font-size:11px;">отбой</div>
<div class="c" style="left:233px;top:536px;width:183px;height:14px;line-height:14px;font-size:11px;"><span class="lnk">Stormer</span></div>
<div class="c" style="left:416px;top:536px;width:259px;height:14px;line-height:14px;font-size:11px;"><span class="lnk">Яна-Наташа</span></div>
<div class="c" style="left:762px;top:536px;width:356px;height:14px;line-height:14px;font-size:11px;letter-spacing:.27px"><span class="lnk">https://amurforum.com/index.php?act=findpost&amp;pid=1677494</span></div>
<div class="c" style="left:1121.500px;top:536px;width:65.500px;height:14px;line-height:14px;text-align:left;letter-spacing:.15px">Улица Мичурина</div>
<div class="c" style="left:85px;top:553.8px;width:72px;height:14px;line-height:14px;font-size:11px;letter-spacing:.38px;padding-left:1px">2017/11/03</div>
<div class="c" style="left:157px;top:553.8px;width:29px;height:14px;line-height:14px;font-size:11px;color:#111">-</div>
<div class="c" style="left:186px;top:553.8px;width:47px;height:14px;line-height:14px;font-size:11px;">тест</div>
<div class="c" style="left:233px;top:553.8px;width:183px;height:14px;line-height:14px;font-size:11px;"><span class="lnk">Stormer</span></div>
<div class="c" style="left:416px;top:553.8px;width:259px;height:14px;line-height:14px;font-size:11px;"><span class="lnk">Елена Молчанова</span></div>
<div class="c" style="left:675px;top:553.8px;width:84px;height:14px;line-height:14px;font-size:11px;">ДТ345!</div>
<div class="c" style="left:762px;top:553.8px;width:356px;height:14px;line-height:14px;font-size:11px;letter-spacing:.27px"><span class="lnk">https://amurforum.com/index.php?act=findpost&amp;pid=1664855</span></div>
<div class="c" style="left:1121.500px;top:553.8px;width:65.500px;height:14px;line-height:14px;text-align:left;letter-spacing:.15px">Пересечение улиц</div>
<div class="c" style="left:85px;top:571.55px;width:72px;height:14px;line-height:14px;font-size:11px;letter-spacing:.38px;padding-left:1px">2017/11/03</div>
<div class="c" style="left:157px;top:571.55px;width:29px;height:14px;line-height:14px;font-size:11px;color:#111">-</div>
<div class="c" style="left:186px;top:571.55px;width:47px;height:14px;line-height:14px;font-size:11px;">отбой</div>
<div class="c" style="left:233px;top:571.55px;width:183px;height:14px;line-height:14px;font-size:11px;"><span class="lnk">Stormer</span></div>
<div class="c" style="left:416px;top:571.55px;width:259px;height:14px;line-height:14px;font-size:11px;"><span class="lnk">Вика 'Пизданувшаяся массажистка'</span></div>
<div class="c" style="left:675px;top:571.55px;width:84px;height:14px;line-height:14px;font-size:11px;">ДТ344!</div>
<div class="c" style="left:762px;top:571.55px;width:356px;height:14px;line-height:14px;font-size:11px;letter-spacing:.27px"><span class="lnk">https://amurforum.com/index.php?act=findpost&amp;pid=1664824</span></div>
<div class="c" style="left:1121.500px;top:571.55px;width:65.500px;height:14px;line-height:14px;text-align:left;letter-spacing:.15px">Пересечение улиц</div>
<div class="c" style="left:85px;top:589.35px;width:72px;height:14px;line-height:14px;font-size:11px;letter-spacing:.38px;padding-left:1px">2017/10/30</div>
<div class="c" style="left:157px;top:589.35px;width:29px;height:14px;line-height:14px;font-size:11px;color:#111">-</div>
<div class="c" style="left:186px;top:589.35px;width:47px;height:14px;line-height:14px;font-size:11px;">отбой</div>
<div class="c" style="left:233px;top:589.35px;width:183px;height:14px;line-height:14px;font-size:11px;"><span class="lnk">Wind37</span></div>
<div class="c" style="left:416px;top:589.35px;width:259px;height:14px;line-height:14px;font-size:11px;"><span class="lnk">Массажный салон 'Нефть'</span></div>
<div class="c" style="left:762px;top:589.35px;width:356px;height:14px;line-height:14px;font-size:11px;letter-spacing:.27px"><span class="lnk">https://amurforum.com/index.php?act=findpost&amp;pid=1662662</span></div>
<div class="c" style="left:1121.500px;top:589.35px;width:65.500px;height:14px;line-height:14px;text-align:left;letter-spacing:.15px">Пересечение улиц</div>
<div class="c" style="left:85px;top:607.25px;width:72px;height:14px;line-height:14px;font-size:11px;letter-spacing:.38px;padding-left:1px">2017/10/30</div>
<div class="c" style="left:157px;top:607.25px;width:29px;height:14px;line-height:14px;font-size:11px;color:#111">-</div>
<div class="c" style="left:186px;top:607.25px;width:47px;height:14px;line-height:14px;font-size:11px;">тест</div>
<div class="c" style="left:233px;top:607.25px;width:183px;height:14px;line-height:14px;font-size:11px;"><span class="lnk">amato01</span></div>
<div class="c" style="left:416px;top:607.25px;width:259px;height:14px;line-height:14px;font-size:11px;"><span class="lnk">Танюшка (Людмила) в татушках с трассы</span></div>
<div class="c" style="left:675px;top:607.25px;width:84px;height:14px;line-height:14px;font-size:11px;">ДТ323!</div>
<div class="c" style="left:762px;top:607.25px;width:356px;height:14px;line-height:14px;font-size:11px;letter-spacing:.27px"><span class="lnk">https://amurforum.com/index.php?act=findpost&amp;pid=1662623</span></div>
<div class="c" style="left:1121.500px;top:607.25px;width:65.500px;height:14px;line-height:14px;text-align:left;letter-spacing:.15px">Щербинки-1</div>
<div class="c" style="left:85px;top:625.15px;width:72px;height:14px;line-height:14px;font-size:11px;letter-spacing:.38px;padding-left:1px">2017/10/22</div>
<div class="c" style="left:157px;top:625.15px;width:29px;height:14px;line-height:14px;font-size:11px;color:#111">-</div>
<div class="c" style="left:186px;top:625.15px;width:47px;height:14px;line-height:14px;font-size:11px;">отбой</div>
<div class="c" style="left:233px;top:625.15px;width:183px;height:14px;line-height:14px;font-size:11px;"><span class="lnk">Stormer</span></div>
<div class="c" style="left:416px;top:625.15px;width:259px;height:14px;line-height:14px;font-size:11px;"><span class="lnk">Белобрысая поросятина</span></div>
<div class="c" style="left:762px;top:625.15px;width:356px;height:14px;line-height:14px;font-size:11px;letter-spacing:.27px"><span class="lnk">https://amurforum.com/index.php?act=findpost&amp;pid=1659602</span></div>
<div class="c" style="left:1121.500px;top:625.15px;width:65.500px;height:14px;line-height:14px;text-align:left;letter-spacing:.15px">Улица Чкалова</div>
<div class="c" style="left:85px;top:643.1px;width:72px;height:14px;line-height:14px;font-size:11px;letter-spacing:.38px;padding-left:1px">2017/10/22</div>
<div class="c" style="left:157px;top:643.1px;width:29px;height:14px;line-height:14px;font-size:11px;color:#111">-</div>
<div class="c" style="left:186px;top:643.1px;width:47px;height:14px;line-height:14px;font-size:11px;">отбой</div>
<div class="c" style="left:233px;top:643.1px;width:183px;height:14px;line-height:14px;font-size:11px;"><span class="lnk">Stormer</span></div>
<div class="c" style="left:416px;top:643.1px;width:259px;height:14px;line-height:14px;font-size:11px;"><span class="lnk">Брюнетка-Свиноматка-Биосарделька</span></div>
<div class="c" style="left:762px;top:643.1px;width:356px;height:14px;line-height:14px;font-size:11px;letter-spacing:.27px"><span class="lnk">https://amurforum.com/index.php?act=findpost&amp;pid=1659594</span></div>
<div class="c" style="left:1121.500px;top:643.1px;width:65.500px;height:14px;line-height:14px;text-align:left;letter-spacing:.15px">Улица Чкалова</div>
<div class="c" style="left:85px;top:661.05px;width:72px;height:14px;line-height:14px;font-size:11px;letter-spacing:.38px;padding-left:1px">2018/02/26</div>
<div class="c" style="left:157px;top:661.05px;width:29px;height:14px;line-height:14px;font-size:11px;color:#111">-</div>
<div class="c" style="left:186px;top:661.05px;width:47px;height:14px;line-height:14px;font-size:11px;">отбой</div>
<div class="c" style="left:233px;top:661.05px;width:183px;height:14px;line-height:14px;font-size:11px;"><span class="lnk">Stormer</span></div>
<div class="c" style="left:416px;top:661.05px;width:259px;height:14px;line-height:14px;font-size:11px;"><span class="lnk">Юля</span></div>
<div class="c" style="left:762px;top:661.05px;width:356px;height:14px;line-height:14px;font-size:11px;letter-spacing:.27px"><span class="lnk">https://amurforum.com/index.php?act=findpost&amp;pid=1710191</span></div>
<div class="c" style="left:1121.500px;top:661.05px;width:65.500px;height:14px;line-height:14px;text-align:left;letter-spacing:.15px">Пересечение улиц</div>
<div class="c" style="left:85px;top:678.95px;width:72px;height:14px;line-height:14px;font-size:11px;letter-spacing:.38px;padding-left:1px">2017/11/03</div>
<div class="c" style="left:157px;top:678.95px;width:29px;height:14px;line-height:14px;font-size:11px;color:#111">*</div>
<div class="c" style="left:186px;top:678.95px;width:47px;height:14px;line-height:14px;font-size:11px;">тест</div>
<div class="c" style="left:233px;top:678.95px;width:183px;height:14px;line-height:14px;font-size:11px;"><span class="lnk">Гробик</span></div>
<div class="c" style="left:416px;top:678.95px;width:259px;height:14px;line-height:14px;font-size:11px;"><span class="lnk">Юля</span></div>
<div class="c" style="left:762px;top:678.95px;width:356px;height:14px;line-height:14px;font-size:11px;letter-spacing:.27px"><span class="lnk">https://amurforum.com/index.php?act=findpost&amp;pid=1664551</span></div>
<div class="c" style="left:1121.500px;top:678.95px;width:65.500px;height:14px;line-height:14px;text-align:left;letter-spacing:.15px">Пересечение улиц</div>
<div class="c" style="left:85px;top:696.95px;width:72px;height:14px;line-height:14px;font-size:11px;letter-spacing:.38px;padding-left:1px">2017/10/16</div>
<div class="c" style="left:157px;top:696.95px;width:29px;height:14px;line-height:14px;font-size:11px;color:#111">*</div>
<div class="c" style="left:186px;top:696.95px;width:47px;height:14px;line-height:14px;font-size:11px;">тест</div>
<div class="c" style="left:233px;top:696.95px;width:183px;height:14px;line-height:14px;font-size:11px;"><span class="lnk">Brent2011</span></div>
<div class="c" style="left:416px;top:696.95px;width:259px;height:14px;line-height:14px;font-size:11px;"><span class="lnk">Юля</span></div>
<div class="c" style="left:762px;top:696.95px;width:356px;height:14px;line-height:14px;font-size:11px;letter-spacing:.27px"><span class="lnk">https://amurforum.com/index.php?act=findpost&amp;pid=1657404</span></div>
<div class="c" style="left:1121.500px;top:696.95px;width:65.500px;height:14px;line-height:14px;text-align:left;letter-spacing:.15px">Пересечение улиц</div>
<div class="c" style="left:85px;top:714.9px;width:72px;height:14px;line-height:14px;font-size:11px;letter-spacing:.38px;padding-left:1px">2017/10/16</div>
<div class="c" style="left:157px;top:714.9px;width:29px;height:14px;line-height:14px;font-size:11px;color:#111">+</div>
<div class="c" style="left:186px;top:714.9px;width:47px;height:14px;line-height:14px;font-size:11px;">тест</div>
<div class="c" style="left:233px;top:714.9px;width:183px;height:14px;line-height:14px;font-size:11px;"><span class="lnk">amato01</span></div>
<div class="c" style="left:416px;top:714.9px;width:259px;height:14px;line-height:14px;font-size:11px;"><span class="lnk">Катя</span></div>
<div class="c" style="left:675px;top:714.9px;width:84px;height:14px;line-height:14px;font-size:11px;">ДТ342!</div>
<div class="c" style="left:762px;top:714.9px;width:356px;height:14px;line-height:14px;font-size:11px;letter-spacing:.27px"><span class="lnk">https://amurforum.com/index.php?act=findpost&amp;pid=1657516</span></div>
<div class="c" style="left:1121.500px;top:714.9px;width:65.500px;height:14px;line-height:14px;text-align:left;letter-spacing:.15px">Проспект Ленина</div>
</div>
<svg width="1198" height="734" style="left:0;top:0;z-index:5"><rect x="758.800" y="218" width="3.300" height="516" fill="rgba(212,217,229,.93)"/><rect x="758.800" y="197.500" width="3.300" height="20.500" fill="#bdbdbd"/><rect x="73" y="376.700" width="1124" height="3.200" fill="rgba(212,217,229,.93)"/><rect x="35" y="376.700" width="38" height="3.200" fill="#bdbdbd"/></svg>
<div class="abs" style="left:1187px;top:197px;width:10px;height:537px;background:#f5f5f5;border-left:1px solid #e8e8e8"></div>
<div class="abs" style="left:1189px;top:381px;width:7.500px;height:21.500px;background:#c9c9c9"></div>
<svg width="10" height="30" style="left:1187.500px;top:705px" fill="#9a9a9a"><path d="M5 5.800 l2.600 3 h-5.200 z M5 22.600 l2.600-3 h-5.200 z"/></svg>
<div class="abs" style="left:35px;top:733.500px;width:1163px;height:9px;background:#f6f6f6;border-top:1px solid #e4e4e4"></div>
<div class="abs" style="left:762px;top:735px;width:96.500px;height:7px;background:#cfcfcf"></div>
<div class="abs" style="left:1160px;top:734px;width:28px;height:9px;background:#f6f6f6;border-left:1px solid #ddd"></div>
<div class="abs" style="left:1174px;top:734px;width:1px;height:9px;background:#ddd"></div>
<svg width="28" height="9" style="left:1160px;top:734px" fill="#9a9a9a"><path d="M5.200 4.600 l3-2.600 v5.200 z M22.800 4.600 l-3-2.600 v5.200 z"/></svg>
<div class="abs" style="left:35px;top:742.500px;width:1163px;height:33px;background:#eeeeee"></div>
<div class="abs" style="left:107.500px;top:742px;width:135.500px;height:25px;background:#fff;border:1px solid #d8d8d8;border-top:none;border-radius:0 0 2px 2px;box-shadow:0 1px 1.500px rgba(0,0,0,.22)"></div>
<div class="t" style="left:114px;top:749px;font-size:11px;color:#333">Ризультатэ рейдафф</div>
<svg width="8" height="5" style="left:229.500px;top:753.500px"><path d="M0 0 h6 l-3 3.200 z" fill="#b0b0b0"/></svg>
<svg width="12" height="12" style="left:77.500px;top:752.500px"><path d="M0 .9 h10.600 M0 3.700 h10.600 M0 6.500 h10.600 M0 9.300 h10.600" stroke="#555" stroke-width="1.500"/></svg>
<svg width="16" height="19" style="left:1165px;top:751.500px"><path d="M2 .5 H13 Q15 .5 15 2.500 V13.300 Q15 15.300 13 15.300 H9.400 L7.500 17.600 L5.600 15.300 H2 Q0 15.300 0 13.300 V2.500 Q0 .5 2 .5 Z" fill="#747474"/></svg>
<svg width="16" height="18" style="left:1165px;top:751.500px"><path d="M7.500 2.600 Q8.100 7.200 12.500 8 Q8.100 8.800 7.500 13.400 Q6.900 8.800 2.500 8 Q6.900 7.200 7.500 2.600 Z" fill="#fff"/></svg>
<!-- ===== green annotation overlay ===== -->
<svg width="1200" height="775" style="left:0;top:0;z-index:20" fill="none" stroke="#22b14c" stroke-width="2.300" stroke-linejoin="miter">
  <rect x="84.300" y="196.300" width="74.400" height="21.900"/>
  <ellipse cx="145" cy="208.300" rx="11.400" ry="8"/>
  <path d="M160.500 208.400 L239.500 187.400 V198.400 H322.600 V219.800 H239.500 V229.800 Z"/>
  <path d="M117.300 222 L11.600 363.700 H64.500 V506.700 H170.400 V363.700 H223.300 Z"/>
  <text transform="translate(101.200,289.800) scale(.86,1)" font-family="'DejaVu Sans',sans-serif" font-weight="700" font-size="46" fill="#22b14c" stroke="none">1</text>
  <text x="225.900" y="215.400" font-family="'Liberation Sans',sans-serif" font-weight="700" font-size="19.500" fill="#22b14c" stroke="#22b14c" stroke-width=".4">2</text>
</svg>
<!-- selected cell B2 -->
<div class="abs" style="left:85px;top:226px;width:72px;height:18px;border:2px solid #6283ee;z-index:10"></div>
</div>
</body></html>
